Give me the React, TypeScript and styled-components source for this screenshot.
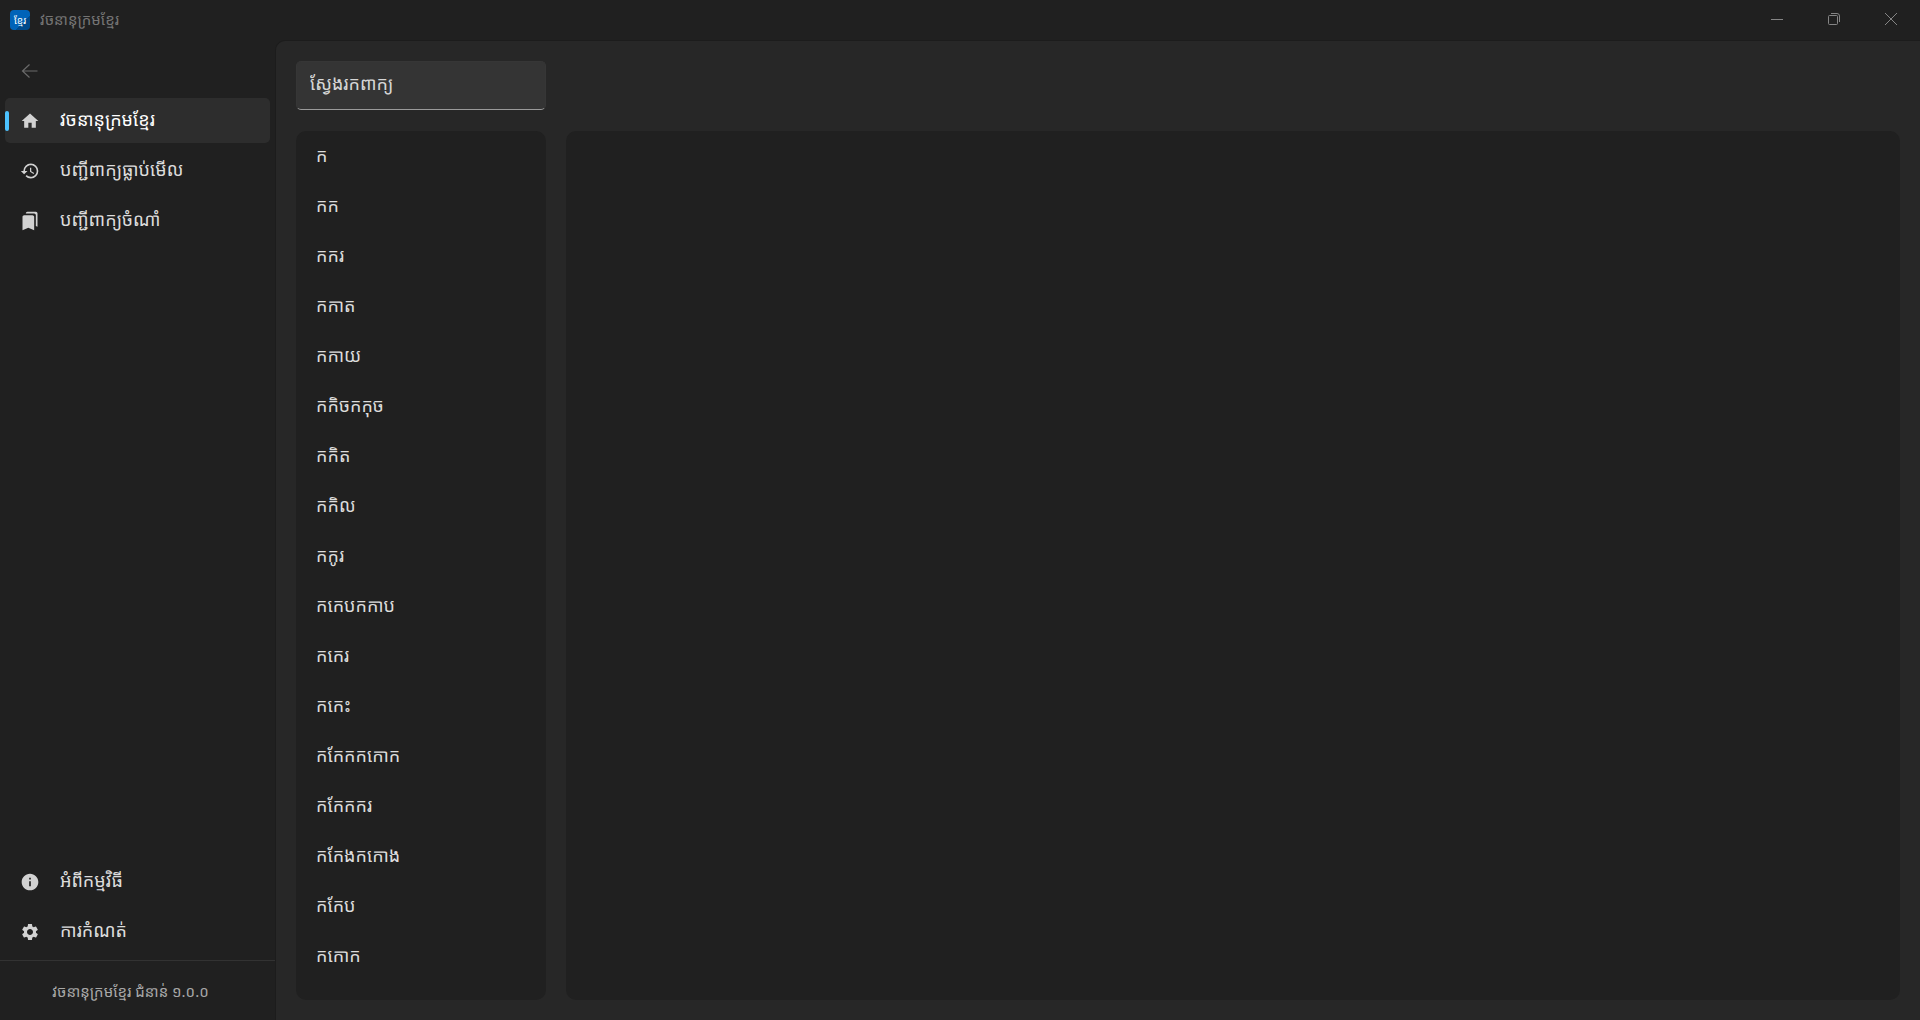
import React, { useState } from "react";
import styled, { createGlobalStyle } from "styled-components";
import { MdBookmarks, MdHistory, MdHome, MdInfo, MdSettings } from "react-icons/md";

const khmer = `"Noto Sans Khmer", "Kantumruy Pro", "Noto Sans", "DejaVu Sans", sans-serif`;

const GlobalStyle = createGlobalStyle`
  *, *::before, *::after { box-sizing: border-box; }
  body { margin: 0; background: #202020; }
  button, input { font: inherit; color: inherit; }
`;

const Window = styled.div`
  display: flex;
  flex-direction: column;
  height: 100vh;
  overflow: hidden;
  background: #202020;
  color: #dcdcdc;
  font-family: ${khmer};
  font-size: 18px;
  font-weight: 400;
`;

const TitleBar = styled.header`
  display: flex;
  align-items: center;
  flex: none;
  height: 40px;
  padding: 0 1px 0 10px;
`;

const AppTitle = styled.h1`
  flex: 1;
  margin: 0 0 0 10px;
  padding-bottom: 2px;
  font-size: 15px;
  font-weight: 400;
  line-height: 24px;
  color: #747474;
`;

const CaptionButton = styled.button`
  display: grid;
  place-items: center;
  width: 57px;
  height: 38px;
  padding: 0;
  border: 0;
  background: transparent;
  color: #858585;
  align-self: flex-start;

  &:hover { background: #2d2d2d; }
`;

const Body = styled.div`
  display: flex;
  flex: 1;
  min-height: 0;
`;

const Sidebar = styled.aside`
  display: flex;
  flex-direction: column;
  flex: none;
  width: 275px;
`;

const Nav = styled.nav`
  display: flex;
  flex: 1;
  flex-direction: column;
  gap: 5px;
  padding: 8px 5px 6px;
`;

const Spacer = styled.div`
  flex: 1;
`;

const NavItem = styled.button<{ $active?: boolean }>`
  position: relative;
  display: flex;
  align-items: center;
  gap: 20px;
  height: 45px;
  padding: 0 15px;
  border: 0;
  border-radius: 5px;
  background: ${(p) => (p.$active ? "#2d2d2d" : "transparent")};
  color: ${(p) => (p.$active ? "#ffffff" : "#dcdcdc")};
  line-height: 30px;
  text-align: left;

  &::before {
    content: "";
    display: ${(p) => (p.$active ? "block" : "none")};
    position: absolute;
    left: 0;
    top: 13px;
    width: 4px;
    height: 20px;
    border-radius: 2px;
    background: #4cc2ff;
  }

  svg { flex: none; color: #d2d2d2; }
`;

const NavLabel = styled.span`
  padding-bottom: 4px;
`;

const BackButton = styled.button`
  display: flex;
  align-items: center;
  width: 50px;
  height: 45px;
  padding: 0 15px;
  border: 0;
  border-radius: 5px;
  background: transparent;
  color: #6a6a6a;
`;

const Version = styled.footer`
  height: 60px;
  padding: 18px 24px 18px 10px;
  border-top: 1px solid #323232;
  color: #a8a8a8;
  font-size: 15px;
  line-height: 24px;
  text-align: center;
`;

const Content = styled.main`
  display: grid;
  flex: 1;
  grid-template-columns: 250px 1fr;
  grid-template-rows: 49px 1fr;
  gap: 21px 20px;
  min-width: 0;
  padding: 20px;
  border-top: 1px solid #1c1c1c;
  border-left: 1px solid #1c1c1c;
  border-top-left-radius: 10px;
  background: #272727;
`;

const SearchBox = styled.input`
  width: 100%;
  padding: 0 13px 6px;
  border: 1px solid #363636;
  border-bottom-color: #9a9a9a;
  border-radius: 5px;
  outline: 0;
  background: #343434;

  &::placeholder { color: #d6d6d6; opacity: 1; }
`;

const Panel = styled.section`
  grid-area: 2 / 2;
  min-height: 0;
  overflow: hidden;
  border-radius: 10px;
  background: #202020;
`;

const WordList = styled.ul`
  grid-area: 2 / 1;
  min-height: 0;
  margin: 0;
  padding: 0;
  overflow: hidden;
  border-radius: 10px;
  background: #202020;
  list-style: none;
`;

const WordButton = styled.button`
  display: block;
  width: 100%;
  height: 50px;
  padding: 0 20px 2px;
  border: 0;
  background: transparent;
  line-height: 30px;
  text-align: left;

  &:hover { background: #2a2a2a; }
`;

const words = [
  "ក", "កក", "កករ", "កកាត", "កកាយ", "កកិចកកុច", "កកិត", "កកិល", "កកូរ",
  "កកេបកកាប", "កកេរ", "កកេះ", "កកែកកកោក", "កកែកករ", "កកែងកកោង", "កកែប", "កកោក",
];

const AppLogo = styled.span`
  display: grid;
  place-items: center;
  width: 20px;
  height: 20px;
  border-radius: 4px;
  background: linear-gradient(135deg, #0063b8 65%, #004a8c 65%);
  color: #ffffff;
  font-size: 10px;
  line-height: 18px;
`;

const mainItems = [
  { id: "home", label: "វចនានុក្រមខ្មែរ", Icon: MdHome },
  { id: "history", label: "បញ្ជីពាក្យធ្លាប់មើល", Icon: MdHistory },
  { id: "bookmarks", label: "បញ្ជីពាក្យចំណាំ", Icon: MdBookmarks },
];

const footerItems = [
  { id: "about", label: "អំពីកម្មវិធី", Icon: MdInfo },
  { id: "settings", label: "ការកំណត់", Icon: MdSettings },
];

export default function App() {
  const [page, setPage] = useState("home");
  const [query, setQuery] = useState("");

  const renderItem = ({ id, label, Icon }: (typeof mainItems)[number]) => (
    <NavItem key={id} $active={page === id} onClick={() => setPage(id)}>
      <Icon size={20} />
      <NavLabel>{label}</NavLabel>
    </NavItem>
  );

  return (
    <Window lang="km">
      <GlobalStyle />
      <TitleBar>
        <AppLogo>ខ្មែរ</AppLogo>
        <AppTitle>វចនានុក្រមខ្មែរ</AppTitle>
        <CaptionButton aria-label="Minimize">
          <svg width="12" height="12" viewBox="0 0 12 12" fill="none" stroke="currentColor">
            <path d="M0 6.5H12" />
          </svg>
        </CaptionButton>
        <CaptionButton aria-label="Restore">
          <svg width="12" height="12" viewBox="0 0 12 12" fill="none" stroke="currentColor">
            <rect x="0.5" y="2.5" width="9" height="9" rx="1" />
            <path d="M3 .5H9A2.5 2.5 0 0 1 11.5 3V9" />
          </svg>
        </CaptionButton>
        <CaptionButton aria-label="Close">
          <svg width="12" height="12" viewBox="0 0 12 12" fill="none" stroke="currentColor">
            <path d="M0 0 12 12M12 0 0 12" />
          </svg>
        </CaptionButton>
      </TitleBar>
      <Body>
        <Sidebar>
          <Nav>
            <BackButton aria-label="Back">
              <svg width="20" height="20" viewBox="0 0 20 20" fill="none" stroke="currentColor" strokeWidth="1.2">
                <path d="M17.5 10H2.5M9.5 3.5 2.5 10 9.5 16.5" />
              </svg>
            </BackButton>
            {mainItems.map(renderItem)}
            <Spacer />
            {footerItems.map(renderItem)}
          </Nav>
          <Version>វចនានុក្រមខ្មែរ ជំនាន់ ១.០.០</Version>
        </Sidebar>
        <Content>
          <SearchBox
            type="text"
            aria-label="ស្វែងរកពាក្យ"
            placeholder="ស្វែងរកពាក្យ"
            value={query}
            onChange={(e) => setQuery(e.target.value)}
          />
          <WordList>
            {words.filter((w) => w.startsWith(query)).map((word) => (
              <li key={word}>
                <WordButton>{word}</WordButton>
              </li>
            ))}
          </WordList>
          <Panel />
        </Content>
      </Body>
    </Window>
  );
}
